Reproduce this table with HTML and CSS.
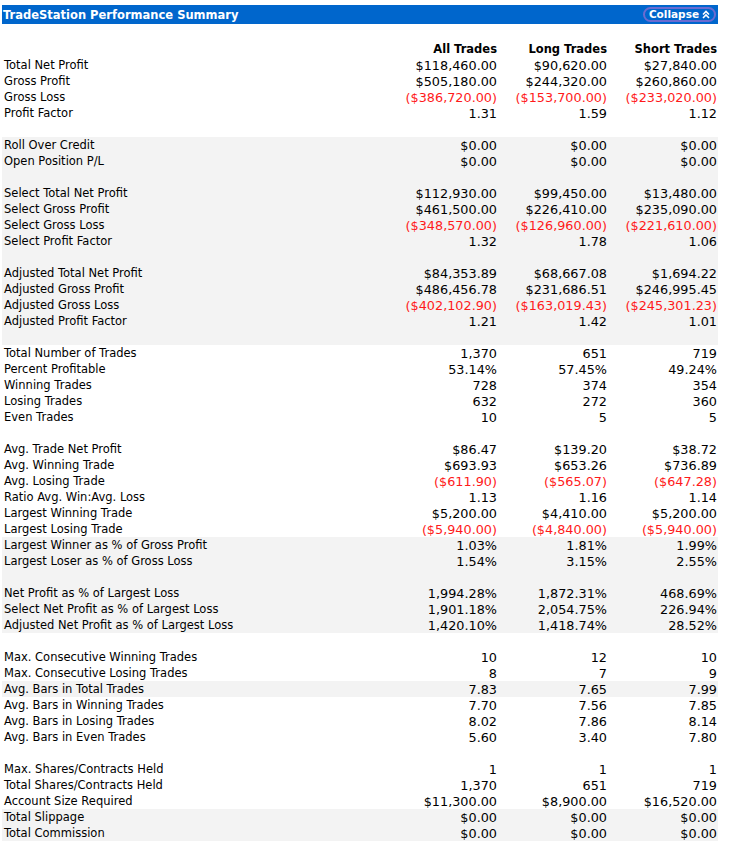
FILE: index.html
```html
<!DOCTYPE html>
<html>
<head>
<meta charset="utf-8">
<link rel="stylesheet" href="styles.css">
</head>
<body>
<div class="panel">
  <div class="titlebar">
    <span class="title">TradeStation Performance Summary</span>
    <span class="collapse">Collapse
      <svg class="chev" width="8" height="9" viewBox="0 0 8 9"><polyline points="1,4.5 4,1.5 7,4.5" fill="none" stroke="#fff" stroke-width="1.6"/><polyline points="1,8 4,5 7,8" fill="none" stroke="#fff" stroke-width="1.6"/></svg>
    </span>
  </div>
  <div class="table">
    <div class="row head"><span></span><span class="h">All Trades</span><span class="h">Long Trades</span><span class="h">Short Trades</span></div>

    <div class="row"><span>Total Net Profit</span><span class="v">$118,460.00</span><span class="v">$90,620.00</span><span class="v">$27,840.00</span></div>
    <div class="row"><span>Gross Profit</span><span class="v">$505,180.00</span><span class="v">$244,320.00</span><span class="v">$260,860.00</span></div>
    <div class="row"><span>Gross Loss</span><span class="v neg">($386,720.00)</span><span class="v neg">($153,700.00)</span><span class="v neg">($233,020.00)</span></div>
    <div class="row"><span>Profit Factor</span><span class="v">1.31</span><span class="v">1.59</span><span class="v">1.12</span></div>
    <div class="row blank"></div>

    <div class="row shade"><span>Roll Over Credit</span><span class="v">$0.00</span><span class="v">$0.00</span><span class="v">$0.00</span></div>
    <div class="row shade"><span>Open Position P/L</span><span class="v">$0.00</span><span class="v">$0.00</span><span class="v">$0.00</span></div>
    <div class="row blank shade"></div>

    <div class="row shade"><span>Select Total Net Profit</span><span class="v">$112,930.00</span><span class="v">$99,450.00</span><span class="v">$13,480.00</span></div>
    <div class="row shade"><span>Select Gross Profit</span><span class="v">$461,500.00</span><span class="v">$226,410.00</span><span class="v">$235,090.00</span></div>
    <div class="row shade"><span>Select Gross Loss</span><span class="v neg">($348,570.00)</span><span class="v neg">($126,960.00)</span><span class="v neg">($221,610.00)</span></div>
    <div class="row shade"><span>Select Profit Factor</span><span class="v">1.32</span><span class="v">1.78</span><span class="v">1.06</span></div>
    <div class="row blank shade"></div>

    <div class="row shade"><span>Adjusted Total Net Profit</span><span class="v">$84,353.89</span><span class="v">$68,667.08</span><span class="v">$1,694.22</span></div>
    <div class="row shade"><span>Adjusted Gross Profit</span><span class="v">$486,456.78</span><span class="v">$231,686.51</span><span class="v">$246,995.45</span></div>
    <div class="row shade"><span>Adjusted Gross Loss</span><span class="v neg">($402,102.90)</span><span class="v neg">($163,019.43)</span><span class="v neg">($245,301.23)</span></div>
    <div class="row shade"><span>Adjusted Profit Factor</span><span class="v">1.21</span><span class="v">1.42</span><span class="v">1.01</span></div>
    <div class="row blank shade"></div>

    <div class="row"><span>Total Number of Trades</span><span class="v">1,370</span><span class="v">651</span><span class="v">719</span></div>
    <div class="row"><span>Percent Profitable</span><span class="v">53.14%</span><span class="v">57.45%</span><span class="v">49.24%</span></div>
    <div class="row"><span>Winning Trades</span><span class="v">728</span><span class="v">374</span><span class="v">354</span></div>
    <div class="row"><span>Losing Trades</span><span class="v">632</span><span class="v">272</span><span class="v">360</span></div>
    <div class="row"><span>Even Trades</span><span class="v">10</span><span class="v">5</span><span class="v">5</span></div>
    <div class="row blank"></div>

    <div class="row"><span>Avg. Trade Net Profit</span><span class="v">$86.47</span><span class="v">$139.20</span><span class="v">$38.72</span></div>
    <div class="row"><span>Avg. Winning Trade</span><span class="v">$693.93</span><span class="v">$653.26</span><span class="v">$736.89</span></div>
    <div class="row"><span>Avg. Losing Trade</span><span class="v neg">($611.90)</span><span class="v neg">($565.07)</span><span class="v neg">($647.28)</span></div>
    <div class="row"><span>Ratio Avg. Win:Avg. Loss</span><span class="v">1.13</span><span class="v">1.16</span><span class="v">1.14</span></div>
    <div class="row"><span>Largest Winning Trade</span><span class="v">$5,200.00</span><span class="v">$4,410.00</span><span class="v">$5,200.00</span></div>
    <div class="row"><span>Largest Losing Trade</span><span class="v neg">($5,940.00)</span><span class="v neg">($4,840.00)</span><span class="v neg">($5,940.00)</span></div>
    <div class="row shade"><span>Largest Winner as % of Gross Profit</span><span class="v">1.03%</span><span class="v">1.81%</span><span class="v">1.99%</span></div>
    <div class="row shade"><span>Largest Loser as % of Gross Loss</span><span class="v">1.54%</span><span class="v">3.15%</span><span class="v">2.55%</span></div>
    <div class="row blank shade"></div>

    <div class="row shade"><span>Net Profit as % of Largest Loss</span><span class="v">1,994.28%</span><span class="v">1,872.31%</span><span class="v">468.69%</span></div>
    <div class="row shade"><span>Select Net Profit as % of Largest Loss</span><span class="v">1,901.18%</span><span class="v">2,054.75%</span><span class="v">226.94%</span></div>
    <div class="row shade"><span>Adjusted Net Profit as % of Largest Loss</span><span class="v">1,420.10%</span><span class="v">1,418.74%</span><span class="v">28.52%</span></div>
    <div class="row blank"></div>

    <div class="row"><span>Max. Consecutive Winning Trades</span><span class="v">10</span><span class="v">12</span><span class="v">10</span></div>
    <div class="row"><span>Max. Consecutive Losing Trades</span><span class="v">8</span><span class="v">7</span><span class="v">9</span></div>
    <div class="row shade"><span>Avg. Bars in Total Trades</span><span class="v">7.83</span><span class="v">7.65</span><span class="v">7.99</span></div>
    <div class="row"><span>Avg. Bars in Winning Trades</span><span class="v">7.70</span><span class="v">7.56</span><span class="v">7.85</span></div>
    <div class="row"><span>Avg. Bars in Losing Trades</span><span class="v">8.02</span><span class="v">7.86</span><span class="v">8.14</span></div>
    <div class="row"><span>Avg. Bars in Even Trades</span><span class="v">5.60</span><span class="v">3.40</span><span class="v">7.80</span></div>
    <div class="row blank"></div>

    <div class="row"><span>Max. Shares/Contracts Held</span><span class="v">1</span><span class="v">1</span><span class="v">1</span></div>
    <div class="row"><span>Total Shares/Contracts Held</span><span class="v">1,370</span><span class="v">651</span><span class="v">719</span></div>
    <div class="row"><span>Account Size Required</span><span class="v">$11,300.00</span><span class="v">$8,900.00</span><span class="v">$16,520.00</span></div>
    <div class="row shade"><span>Total Slippage</span><span class="v">$0.00</span><span class="v">$0.00</span><span class="v">$0.00</span></div>
    <div class="row shade"><span>Total Commission</span><span class="v">$0.00</span><span class="v">$0.00</span><span class="v">$0.00</span></div>
  </div>
</div>
</body>
</html>
```
FILE: styles.css
```css
html, body {
  margin: 0;
  padding: 0;
  background: #ffffff;
}
body {
  font-family: "DejaVu Sans", Verdana, sans-serif;
  font-size: 11.5px;
  color: #000;
}
.panel {
  width: 716px;
  margin: 5px 0 0 2px;
}
.titlebar {
  height: 19px;
  background: #0066cc;
  display: flex;
  align-items: center;
  justify-content: space-between;
  padding: 0 2px 0 1px;
  box-sizing: border-box;
}
.title {
  color: #fff;
  font-weight: bold;
  font-size: 11.5px;
}
.collapse {
  display: flex;
  align-items: center;
  gap: 3px;
  color: #fff;
  font-weight: bold;
  font-size: 10.5px;
  border: 2px solid #6b6bd0;
  border-radius: 8px;
  height: 11px;
  padding: 0 4px 0 4px;
  line-height: 11px;
}
.chev {
  display: block;
}
.table {
  margin-top: 17px;
}
.row {
  display: grid;
  grid-template-columns: 1fr 110px 110px 110px;
  height: 16px;
  line-height: 17px;
  padding: 0 1px 0 2px;
  white-space: nowrap;
}
.row.shade {
  background: #f3f3f3;
}
.h {
  text-align: right;
  font-weight: bold;
  font-size: 11.5px;
}
.v {
  text-align: right;
  font-size: 12.8px;
}
.neg {
  color: #ff1a1a;
}
```
